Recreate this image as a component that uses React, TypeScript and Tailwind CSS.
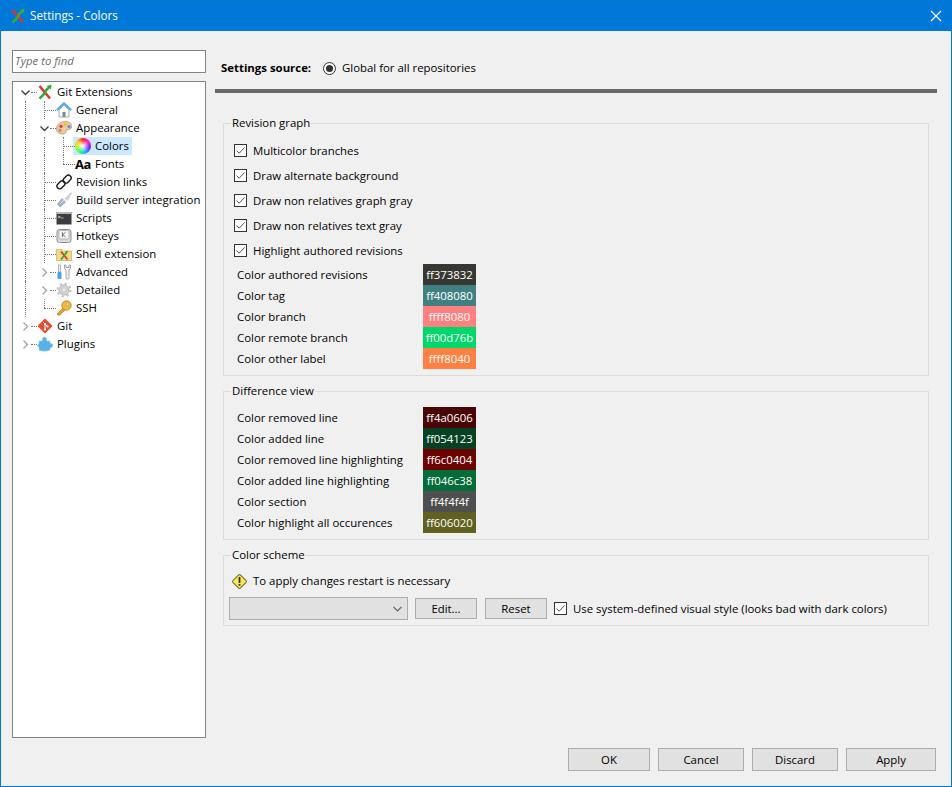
import React from "react";

const font = "font-['Open_Sans',sans-serif] text-[11.4px] leading-none text-black";

const GitExtIcon = ({ size = 16 }: { size?: number }) => (
  <svg width={size} height={size} viewBox="0 0 16 16" fill="none">
    <path d="M2.5 2 L13 14.5" stroke="#d8362a" strokeWidth="2.6" />
    <path d="M2.5 14.5 C5 12 8 10 8.5 7.5 C9 5.5 10.5 4.5 12 3.5" stroke="#3fa535" strokeWidth="2.6" />
    <path d="M9.5 2 L14.5 0.5 L14 5.5 Z" fill="#3fa535" />
  </svg>
);

const HomeIcon = () => (
  <svg width="16" height="16" viewBox="0 0 16 16" fill="none">
    <path d="M3 8 V15 H13 V8 L8 3 Z" fill="#fff" stroke="#8a97a5" strokeWidth="0.8" />
    <rect x="6.5" y="10" width="3" height="5" fill="#7d8a98" />
    <path d="M0.8 8.3 L8 1.2 L15.2 8.3" stroke="#5aa9e6" strokeWidth="2" />
  </svg>
);

const PaletteIcon = () => (
  <svg width="16" height="16" viewBox="0 0 16 16">
    <path d="M0.5 9 C0.5 4 5 1.5 9.5 1.5 C13 1.5 15.8 3.5 15.8 6.5 C15.8 9.5 12 9.5 10.5 10 C9.5 10.5 10.5 12 9.5 13 C8 14.8 0.5 14.5 0.5 9 Z" fill="#ecc9a2" stroke="#b08a64" strokeWidth="0.7" />
    <circle cx="5" cy="6.3" r="1.6" fill="#d83a30" />
    <circle cx="9.2" cy="4.2" r="1.6" fill="#e6c52e" />
    <circle cx="13" cy="6.5" r="1.5" fill="#4a8fd8" />
    <circle cx="4" cy="10.5" r="1.4" fill="#b58a62" />
  </svg>
);

const ChainIcon = () => (
  <svg width="16" height="16" viewBox="0 0 16 16" fill="none" stroke="#1a1a1a" strokeWidth="1.4">
    <rect x="0.4" y="8" width="9" height="5.5" rx="2.7" transform="rotate(-45 5 10.7)" />
    <rect x="6.6" y="2.5" width="9" height="5.5" rx="2.7" transform="rotate(-45 11 5.2)" />
  </svg>
);

const PlugIcon = () => (
  <svg width="16" height="16" viewBox="0 0 16 16">
    <path d="M1 12 L6 6 L10 10 L4 15.5 Z" fill="#a3adc6" />
    <path d="M8.5 6.5 L12.5 3 L14.5 5 L11 9 Z" fill="#cfcfcf" />
    <path d="M13 3.5 L15.5 0.8" stroke="#bdbdbd" strokeWidth="1.4" />
    <path d="M4.5 11.5 L8.5 7.5" stroke="#eef0f5" strokeWidth="1" />
  </svg>
);

const TerminalIcon = () => (
  <svg width="16" height="16" viewBox="0 0 16 16">
    <rect x="0.5" y="2" width="15" height="12.5" fill="#3c3c40" />
    <rect x="0.5" y="2" width="15" height="2" fill="#b9b9b9" />
    <path d="M2 6 L4.5 7 L2 8" stroke="#e8e8e8" strokeWidth="0.7" fill="none" />
    <path d="M5 8 H7.5" stroke="#e8e8e8" strokeWidth="0.7" />
  </svg>
);

const KeyCapIcon = () => (
  <svg width="16" height="16" viewBox="0 0 16 16" fill="none">
    <rect x="1" y="1.5" width="14" height="13" rx="2.5" fill="#dcdcdc" stroke="#8f8f8f" />
    <rect x="3" y="2.5" width="10" height="8.5" rx="1.2" fill="#f5f5f5" stroke="#a0a0a0" strokeWidth="0.7" />
    <path d="M6.5 4.3 V9 M9.5 4.3 L6.8 6.6 L9.5 9" stroke="#666" strokeWidth="0.9" />
  </svg>
);

const FolderXIcon = () => (
  <svg width="16" height="16" viewBox="0 0 16 16" fill="none">
    <path d="M0.5 3.5 H6 L7.5 5 H15.5 V14.5 H0.5 Z" fill="#f3d98c" stroke="#c8a85a" strokeWidth="0.7" />
    <path d="M5 5.5 L11.5 13.5" stroke="#d8362a" strokeWidth="1.8" />
    <path d="M5 13.5 C7 11 9.5 8 11.5 5" stroke="#3fa535" strokeWidth="1.8" />
  </svg>
);

const ToolsIcon = () => (
  <svg width="16" height="16" viewBox="0 0 16 16" fill="none">
    <rect x="2.5" y="1" width="2" height="7" fill="#f4f4f4" stroke="#9a9a9a" strokeWidth="0.7" />
    <rect x="1.5" y="8" width="4" height="7" rx="1" fill="#4aa3e4" />
    <path d="M8.5 1 V4.5 L10 6 V14 C10 15.5 13 15.5 13 14 V6 L14.5 4.5 V1 L13 1 V3.5 H10 V1 Z" fill="#f4f4f4" stroke="#8f8f8f" strokeWidth="0.8" />
  </svg>
);

const GearIcon = () => (
  <svg width="16" height="16" viewBox="0 0 16 16" fill="none">
    <circle cx="8" cy="8" r="5" fill="#d6d6d6" stroke="#b5b5b5" />
    <circle cx="8" cy="8" r="6.4" stroke="#c4c4c4" strokeWidth="2.2" strokeDasharray="2.2 2.8" />
    <circle cx="8" cy="8" r="2.2" fill="#efefef" stroke="#b0b0b0" strokeWidth="0.7" />
  </svg>
);

const KeyIcon = () => (
  <svg width="16" height="16" viewBox="0 0 16 16" fill="none">
    <path d="M7 8 L1.5 13.5 V15 H4 L5 14 V12.8 H6.2 L9 10" fill="#e8a52e" stroke="#b97c14" strokeWidth="0.7" />
    <circle cx="10.5" cy="5.5" r="4.7" fill="#f0b93e" stroke="#b97c14" strokeWidth="0.8" />
    <circle cx="11.5" cy="4.3" r="1.3" fill="#fff3cf" stroke="#b97c14" strokeWidth="0.5" />
  </svg>
);

const GitIcon = () => (
  <svg width="16" height="16" viewBox="0 0 16 16" fill="none">
    <rect x="2.6" y="2.6" width="10.8" height="10.8" rx="1.2" transform="rotate(45 8 8)" fill="#e8492f" />
    <path d="M6 4 L10.5 8.5 M8 6 V11.5" stroke="#fff" strokeWidth="1" />
    <circle cx="8" cy="6" r="1.1" fill="#fff" />
    <circle cx="10.5" cy="8.5" r="1.1" fill="#fff" />
    <circle cx="8" cy="11.5" r="1.1" fill="#fff" />
  </svg>
);

const PuzzleIcon = () => (
  <svg width="16" height="16" viewBox="0 0 16 16">
    <path d="M2 5 H5.5 C4.8 2.5 6 1 7.5 1 C9 1 10.2 2.5 9.5 5 H13 V7.5 C14.5 6.8 15.8 8 15.8 9.5 C15.8 11 14.5 12 13 11.5 V14 C10 15.5 5 15.5 2 14 V11 C0.5 11 0.2 8 2 8 Z" fill="#58b2ea" stroke="#8ecdf2" strokeWidth="0.6" />
  </svg>
);

const ColorWheel = () => (
  <span className="block h-4 w-4 rounded-full bg-[radial-gradient(circle,#ffffff_0%,rgba(255,255,255,0)_55%),conic-gradient(#ff2020,#ff20d0,#7020ff,#20a8ff,#20ff90,#b0ff20,#ffd020,#ff2020)]" />
);

const TextIcon = () => (
  <span className="block w-4 text-center font-['Open_Sans',sans-serif] text-[13px] font-bold leading-4 whitespace-nowrap tracking-[-0.5px]">Aa</span>
);

const Chevron = ({ open, dark }: { open: boolean; dark: boolean }) => (
  <svg className="absolute left-[5px] top-[5px] bg-white" width="9" height="9" viewBox="0 0 9 9" fill="none" stroke={dark ? "#404040" : "#a6a6a6"} strokeWidth="1.4">
    {open ? <path d="M0.5 2.5 L4.5 6.5 L8.5 2.5" /> : <path d="M2.5 0.5 L6.5 4.5 L2.5 8.5" />}
  </svg>
);

type Guide = "none" | "pipe" | "tee" | "end" | "stub" | "open" | "closed" | "closedDark";

const GuideCell = ({ kind }: { kind: Guide }) => (
  <span className="relative block h-[18px] w-[19px] shrink-0">
    {(kind === "pipe" || kind === "tee") && <span className="absolute bottom-0 left-[9px] top-0 border-l border-dotted border-[#7a7a7a]" />}
    {kind === "end" && <span className="absolute left-[9px] top-0 h-[9px] border-l border-dotted border-[#7a7a7a]" />}
    {(kind === "tee" || kind === "end" || kind === "stub" || kind === "open" || kind === "closed" || kind === "closedDark") && (
      <span className={`absolute top-[9px] border-t border-dotted border-[#7a7a7a] ${kind === "tee" || kind === "end" ? "left-[9px] w-[12px]" : "left-[15px] w-[6px]"}`} />
    )}
    {kind === "open" && <Chevron open dark />}
    {kind === "closed" && <Chevron open={false} dark={false} />}
  </span>
);

type TreeRow = { guides: Guide[]; icon: React.ReactNode; label: string; selected?: boolean };

const rows: TreeRow[] = [
  { guides: ["open"], icon: <GitExtIcon />, label: "Git Extensions" },
  { guides: ["pipe", "tee"], icon: <HomeIcon />, label: "General" },
  { guides: ["pipe", "open"], icon: <PaletteIcon />, label: "Appearance" },
  { guides: ["pipe", "pipe", "tee"], icon: <ColorWheel />, label: "Colors", selected: true },
  { guides: ["pipe", "pipe", "end"], icon: <TextIcon />, label: "Fonts" },
  { guides: ["pipe", "tee"], icon: <ChainIcon />, label: "Revision links" },
  { guides: ["pipe", "tee"], icon: <PlugIcon />, label: "Build server integration" },
  { guides: ["pipe", "tee"], icon: <TerminalIcon />, label: "Scripts" },
  { guides: ["pipe", "tee"], icon: <KeyCapIcon />, label: "Hotkeys" },
  { guides: ["pipe", "tee"], icon: <FolderXIcon />, label: "Shell extension" },
  { guides: ["pipe", "closed"], icon: <ToolsIcon />, label: "Advanced" },
  { guides: ["pipe", "closed"], icon: <GearIcon />, label: "Detailed" },
  { guides: ["pipe", "end"], icon: <KeyIcon />, label: "SSH" },
  { guides: ["closed"], icon: <GitIcon />, label: "Git" },
  { guides: ["closed"], icon: <PuzzleIcon />, label: "Plugins" },
];

const Tree = () => (
  <div className="mt-2 flex-1 border border-[#828282] bg-white pl-[3px] pt-px">
    {rows.map((row) => (
      <div key={row.label} className="flex h-[18px] items-center">
        {row.guides.map((g, i) => (
          <GuideCell key={i} kind={g} />
        ))}
        <div className={`flex h-[18px] items-center gap-1 pl-[2px] pr-[3px] ${row.selected ? "bg-[#cce8ff]" : ""}`}>
          <span className="relative z-10 block h-4 w-4 shrink-0">{row.icon}</span>
          <span className="whitespace-nowrap">{row.label}</span>
        </div>
      </div>
    ))}
  </div>
);

const CheckBox = () => (
  <span className="flex h-[13px] w-[13px] shrink-0 items-center justify-center border border-[#333] bg-white">
    <svg width="11" height="11" viewBox="0 0 11 11" fill="none" stroke="#555" strokeWidth="1">
      <path d="M1.5 5.5 L4.2 8.2 L9.5 2.5" />
    </svg>
  </span>
);

const CheckRow = ({ label }: { label: string }) => (
  <div className="flex h-[25px] items-center gap-[6px] pl-[10px]">
    <CheckBox />
    <span className="whitespace-nowrap">{label}</span>
  </div>
);

const ColorRow = ({ label, hex, bg }: { label: string; hex: string; bg: string }) => (
  <div className="flex h-[21px] items-center pl-[13px]">
    <span className="w-[186px] whitespace-nowrap">{label}</span>
    <span className={`flex h-[21px] w-[53px] items-center justify-center text-white ${bg}`}>{hex}</span>
  </div>
);

const GroupBox = ({ title, className, children }: { title: string; className: string; children: React.ReactNode }) => (
  <fieldset className={`border border-[#dcdcdc] ${className}`}>
    <legend className="ml-[7px] h-4 px-[1px] leading-4">{title}</legend>
    {children}
  </fieldset>
);

const Button = ({ label, className }: { label: string; className: string }) => (
  <button className={`border border-[#adadad] bg-[#e1e1e1] text-center ${className}`}>{label}</button>
);

const WarningIcon = () => (
  <svg width="17" height="17" viewBox="0 0 17 17">
    <rect x="3.2" y="3.2" width="10.6" height="10.6" rx="1.5" transform="rotate(45 8.5 8.5)" fill="#f7ea55" stroke="#6f6a3c" strokeWidth="1" />
    <rect x="7.6" y="4" width="1.8" height="6" fill="#333" />
    <rect x="7.6" y="11" width="1.8" height="1.8" fill="#333" />
  </svg>
);

export default function App() {
  return (
    <div className={`flex h-[787px] w-[952px] flex-col overflow-hidden border border-[#0078d7] bg-[#f0f0f0] ${font}`}>
      {/* title bar */}
      <div className="flex h-[30px] shrink-0 items-center justify-between bg-[#0078d7] pl-[9px] pr-[9px] text-white">
        <div className="flex items-center gap-[4px]">
          <GitExtIcon size={16} />
          <span className="text-[11.7px]">Settings - Colors</span>
        </div>
        <svg width="12" height="12" viewBox="0 0 12 12" stroke="#fff" strokeWidth="1.1">
          <path d="M1 1 L11 11 M11 1 L1 11" />
        </svg>
      </div>

      <div className="flex min-h-0 flex-1">
        {/* left column */}
        <div className="ml-[11px] mt-[19px] mb-[48px] flex w-[194px] shrink-0 flex-col">
          <div className="flex h-[23px] items-center border border-[#828282] bg-white pb-px pl-[2px] italic text-[#6d6d6d]">Type to find</div>
          <Tree />
        </div>

        {/* right column */}
        <div className="ml-[9px] flex w-[722px] flex-col">
          <div className="flex h-[58px] items-center pl-[6px] pt-[16px]">
            <span className="w-[102px] whitespace-nowrap font-bold">Settings source:</span>
            <span className="flex h-[13px] w-[13px] items-center justify-center rounded-full border border-[#333] bg-white">
              <span className="block h-[7px] w-[7px] rounded-full bg-[#333]" />
            </span>
            <span className="ml-[6px] whitespace-nowrap">Global for all repositories</span>
          </div>
          <div className="h-1 bg-[#696969]" />

          <div className="ml-2 mt-[22px] flex w-[706px] flex-col">
            <GroupBox title="Revision graph" className="h-[261px] pt-[7px]">
              <CheckRow label="Multicolor branches" />
              <CheckRow label="Draw alternate background" />
              <CheckRow label="Draw non relatives graph gray" />
              <CheckRow label="Draw non relatives text gray" />
              <CheckRow label="Highlight authored revisions" />
              <div className="mt-px">
                <ColorRow label="Color authored revisions" hex="ff373832" bg="bg-[#373832]" />
                <ColorRow label="Color tag" hex="ff408080" bg="bg-[#408080]" />
                <ColorRow label="Color branch" hex="ffff8080" bg="bg-[#ff8080]" />
                <ColorRow label="Color remote branch" hex="ff00d76b" bg="bg-[#00d76b]" />
                <ColorRow label="Color other label" hex="ffff8040" bg="bg-[#ff8040]" />
              </div>
            </GroupBox>

            <GroupBox title="Difference view" className="mt-[7px] h-[157px] pt-[8px]">
              <ColorRow label="Color removed line" hex="ff4a0606" bg="bg-[#4a0606]" />
              <ColorRow label="Color added line" hex="ff054123" bg="bg-[#054123]" />
              <ColorRow label="Color removed line highlighting" hex="ff6c0404" bg="bg-[#6c0404]" />
              <ColorRow label="Color added line highlighting" hex="ff046c38" bg="bg-[#046c38]" />
              <ColorRow label="Color section" hex="ff4f4f4f" bg="bg-[#4f4f4f]" />
              <ColorRow label="Color highlight all occurences" hex="ff606020" bg="bg-[#606020]" />
            </GroupBox>

            <GroupBox title="Color scheme" className="mt-[7px] h-[79px] pt-[9px]">
              <div className="flex h-[18px] items-center gap-[5px] pl-[7px]">
                <WarningIcon />
                <span className="whitespace-nowrap">To apply changes restart is necessary</span>
              </div>
              <div className="mt-[7px] flex items-center pl-[5px]">
                <div className="flex h-[23px] w-[179px] items-center justify-end border border-[#adadad] bg-[#e1e1e1] pr-[5px]">
                  <svg width="9" height="6" viewBox="0 0 9 6" fill="none" stroke="#606060" strokeWidth="1.2">
                    <path d="M0.5 0.8 L4.5 4.8 L8.5 0.8" />
                  </svg>
                </div>
                <Button label="Edit..." className="ml-[7px] h-[21px] w-[62px]" />
                <Button label="Reset" className="ml-2 h-[21px] w-[62px]" />
                <span className="ml-[7px]"><CheckBox /></span>
                <span className="ml-[6px] whitespace-nowrap">Use system-defined visual style (looks bad with dark colors)</span>
              </div>
            </GroupBox>
          </div>

          <div className="mt-auto mb-[15px] mr-px flex justify-end gap-2">
            <Button label="OK" className="h-[23px] w-[82px]" />
            <Button label="Cancel" className="h-[23px] w-[86px]" />
            <Button label="Discard" className="h-[23px] w-[86px]" />
            <Button label="Apply" className="h-[23px] w-[90px]" />
          </div>
        </div>
      </div>
    </div>
  );
}
